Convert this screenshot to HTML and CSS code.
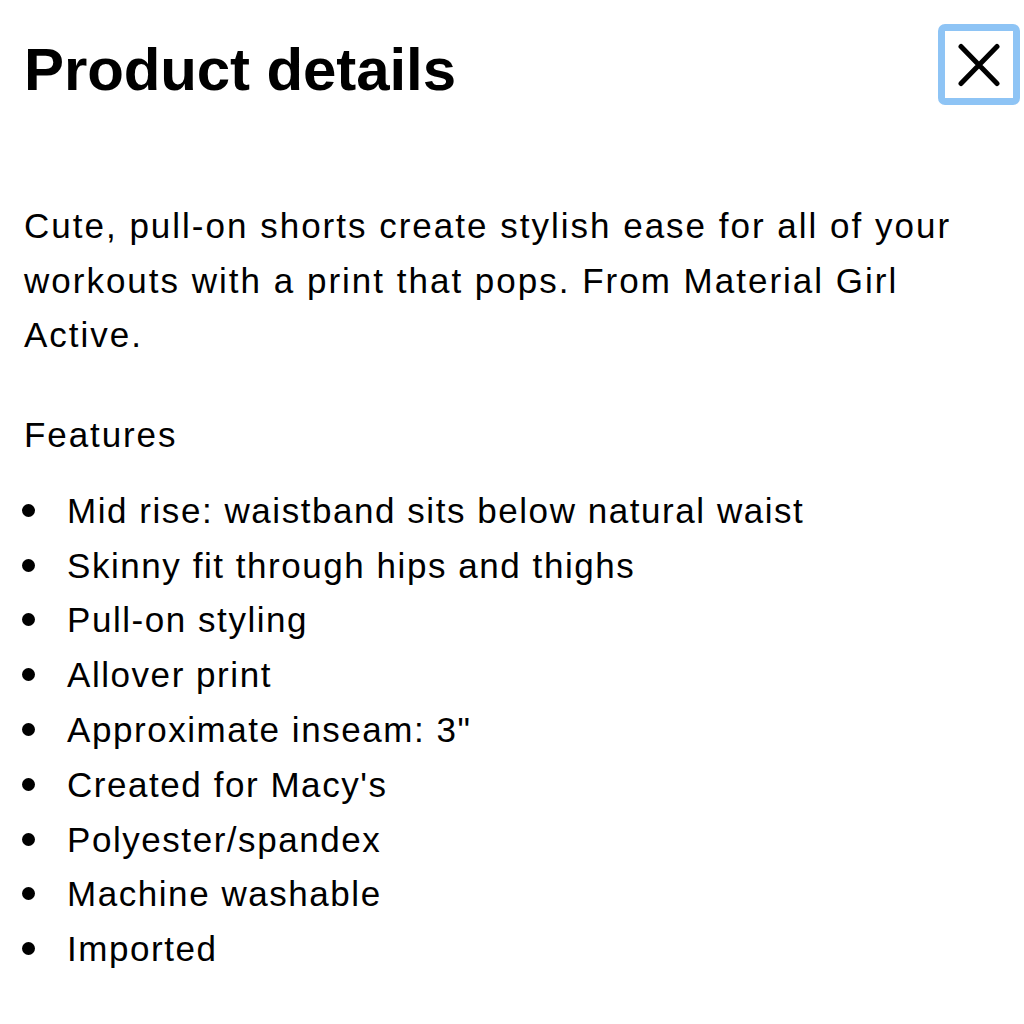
FILE: index.html
```html
<!DOCTYPE html>
<html>
<head>
<meta charset="utf-8">
<link rel="stylesheet" href="styles.css">
</head>
<body>
<div class="panel">
  <header class="head">
    <h1 class="title">Product details</h1>
    <button class="close" aria-label="Close">
      <svg width="44" height="44" viewBox="0 0 44 44"><path d="M4 3.5L40 40.5M40 3.5L4 40.5" stroke="#000" stroke-width="5" stroke-linecap="round"/></svg>
    </button>
  </header>
  <p class="desc">Cute, pull-on shorts create stylish ease for all of your workouts with a print that pops. From Material Girl Active.</p>
  <h2 class="sub">Features</h2>
  <ul class="list">
    <li>Mid rise: waistband sits below natural waist</li>
    <li>Skinny fit through hips and thighs</li>
    <li>Pull-on styling</li>
    <li>Allover print</li>
    <li>Approximate inseam: 3"</li>
    <li>Created for Macy's</li>
    <li>Polyester/spandex</li>
    <li>Machine washable</li>
    <li>Imported</li>
  </ul>
</div>
</body>
</html>
```
FILE: styles.css
```css
html, body { margin: 0; padding: 0; background: #fff; }
body { font-family: "Liberation Sans", Arial, sans-serif; color: #000; }
.panel { padding: 0 24px; width: 1024px; box-sizing: border-box; }
.head { display: flex; justify-content: space-between; align-items: flex-start; padding-top: 24px; }
.title { margin: 13px 0 0; font-size: 60px; font-weight: 700; line-height: 66px; letter-spacing: -0.1px; }
.close { width: 82px; height: 81px; margin-right: -20px; border: 7px solid #8ec4f5; border-radius: 7px; background: #fff; display: flex; align-items: center; justify-content: center; padding: 0; }
.desc { margin: 94px 0 0; font-size: 35px; line-height: 54.6px; letter-spacing: 2px; }
.sub { margin: 44px 0 0; font-size: 35px; font-weight: 400; line-height: 55px; letter-spacing: 1.9px; }
.list { list-style: none; margin: 22px 0 0; padding: 0; font-size: 35px; line-height: 54.8px; letter-spacing: 1.55px; }
.list li { display: flex; align-items: baseline; }
.list li::before { content: ""; flex: none; width: 13px; height: 13px; border-radius: 50%; background: #000; margin: 0 32px 0 -2px; position: relative; top: -6px; }
```
